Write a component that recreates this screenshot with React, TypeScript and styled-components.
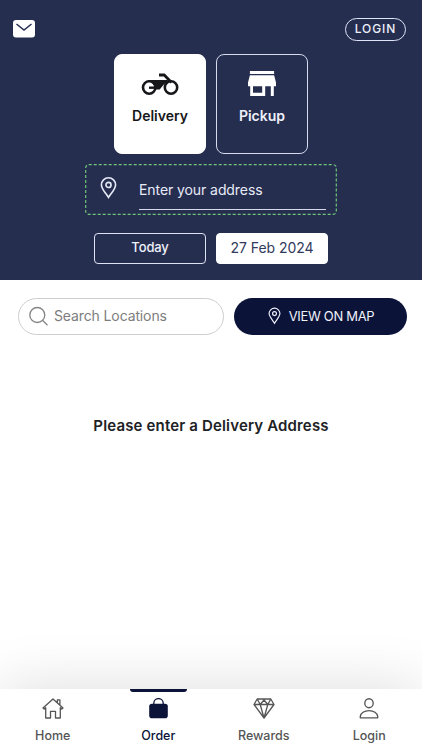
import React from "react";
import styled, { createGlobalStyle } from "styled-components";

const navy = "#262e50";
const deepNavy = "#0b1339";

const GlobalStyle = createGlobalStyle`
  *, *::before, *::after { box-sizing: border-box; }
  body { margin: 0; background: #fff; font-family: Inter, "Liberation Sans", sans-serif; }
  button, input { font: inherit; margin: 0; padding: 0; border: 0; background: none; color: inherit; }
  svg { display: block; flex: none; }
`;

const Screen = styled.div`
  width: 422px;
  height: 750px;
  display: flex;
  flex-direction: column;
  overflow: hidden;
  background: #fff;
`;

const Header = styled.header`
  height: 280px;
  flex: none;
  display: flex;
  flex-direction: column;
  align-items: center;
  padding-top: 17px;
  background: ${navy};
`;

const TopBar = styled.div`
  width: 100%;
  height: 24px;
  display: flex;
  align-items: center;
  justify-content: space-between;
  padding: 0 16px 0 13px;
`;

const LoginPill = styled.button`
  width: 61px;
  height: 23px;
  border: 1.5px solid #dfe4f8;
  border-radius: 12px;
  color: #edf0fa;
  font-size: 12px;
  font-weight: 500;
  letter-spacing: 0.9px;
  line-height: 20px;
`;

const Modes = styled.div`
  display: flex;
  gap: 10px;
  margin-top: 13px;
`;

const ModeCard = styled.button<{ $active?: boolean }>`
  width: 92px;
  height: 100px;
  display: flex;
  flex-direction: column;
  align-items: center;
  padding-top: ${(p) => (p.$active ? 16 : 15)}px;
  border: 1px solid ${(p) => (p.$active ? "#fff" : "#d5daef")};
  border-radius: 8px;
  background: ${(p) => (p.$active ? "#fff" : "transparent")};
  color: ${(p) => (p.$active ? "#17171a" : "#eef0f9")};
  font-size: 14px;
  font-weight: 600;
  line-height: 18px;
  gap: ${(p) => (p.$active ? 9 : 10)}px;
`;

const AddressBox = styled.div`
  position: relative;
  width: 252px;
  height: 51px;
  margin-top: 10px;
  display: flex;
  padding: 12px 11px 5px 15px;
  color: #e6e9f6;
`;

const DashedFrame = styled.svg`
  position: absolute;
  inset: 0;
  pointer-events: none;
`;

const AddressInput = styled.input`
  width: 187px;
  height: 34px;
  margin: 0 0 0 auto;
  padding-bottom: 6px;
  border-bottom: 1px solid #d6daeb;
  outline: 0;
  border-radius: 0;
  font-size: 14px;
  letter-spacing: -0.08px;
  &::placeholder { color: #e8ebf7; opacity: 1; }
`;

const Dates = styled.div`
  display: flex;
  gap: 10px;
  margin-top: 17.5px;
`;

const DateButton = styled.button<{ $filled?: boolean }>`
  width: 112px;
  height: 31px;
  padding-bottom: 2px;
  border: 1.3px solid ${(p) => (p.$filled ? "#fff" : "#dde2f5")};
  border-radius: 4px;
  background: ${(p) => (p.$filled ? "#fff" : "transparent")};
  color: ${(p) => (p.$filled ? "#323a5c" : "#eef0fa")};
  font-size: ${(p) => (p.$filled ? 14 : 13)}px;
  font-weight: ${(p) => (p.$filled ? 400 : 500)};
  letter-spacing: ${(p) => (p.$filled ? -0.05 : -0.15)}px;
`;

const Content = styled.main`
  flex: 1;
  display: flex;
  flex-direction: column;
  align-items: center;
`;

const SearchRow = styled.div`
  width: 100%;
  display: flex;
  gap: 10px;
  padding: 17.5px 15.5px 0 17.5px;
`;

const SearchField = styled.label`
  width: 206px;
  height: 37px;
  display: flex;
  align-items: center;
  gap: 6px;
  padding-left: 10.5px;
  border: 1px solid #cecece;
  border-radius: 19px;
  color: #858585;
`;

const SearchInput = styled.input`
  width: 150px;
  padding-bottom: 2px;
  font-size: 14px;
  letter-spacing: -0.12px;
  outline: 0;
  &::placeholder { color: #7d7d7d; opacity: 1; }
`;

const MapButton = styled.button`
  width: 173px;
  height: 37px;
  display: flex;
  align-items: center;
  justify-content: center;
  gap: 8px;
  padding-left: 2px;
  border-radius: 19px;
  background: ${deepNavy};
  color: #f0f2fb;
  font-size: 13px;
  letter-spacing: -0.33px;
`;

const Message = styled.h1`
  margin: 81.5px 0 0;
  font-size: 15px;
  line-height: 20px;
  font-weight: 600;
  letter-spacing: 0.16px;
  color: #202124;
`;

const Nav = styled.nav`
  height: 61.5px;
  flex: none;
  display: grid;
  grid-template-columns: repeat(4, 1fr);
  background: #fff;
  box-shadow: 0 0 60px rgba(0, 0, 0, 0.14);
`;

const NavItem = styled.button<{ $active?: boolean }>`
  display: flex;
  flex-direction: column;
  align-items: center;
  justify-content: flex-start;
  color: ${(p) => (p.$active ? deepNavy : "#555")};
  font-size: 12.5px;
  font-weight: 500;
  line-height: 16px;
  gap: 9px;
  &::before {
    content: "";
    width: 57px;
    height: 3px;
    margin-bottom: -3px;
    border-radius: 0 0 3px 3px;
    background: ${(p) => (p.$active ? deepNavy : "transparent")};
  }
`;

const Mail = () => (
  <svg width="22" height="18" viewBox="0 0 22 18">
    <rect width="22" height="17.5" rx="3" fill="#fff" />
    <path d="M3.5 4 11 10 18.5 4" fill="none" stroke={navy} strokeWidth="1.5" />
  </svg>
);

const Motorcycle = () => (
  <svg width="38" height="27" viewBox="0 0 38 27" fill="none" stroke="#17171a">
    <circle cx="8.2" cy="16.5" r="6.2" strokeWidth="2.6" />
    <circle cx="30" cy="16.5" r="6.2" strokeWidth="2.6" />
    <path d="M18 4h5.2L30.5 11.5" strokeWidth="2.8" />
    <path d="M6.5 9h20l1.8 1.4c-4.5 1.2-6.8 4.2-9.6 8.2h-4.2c-.2-4-2.9-7.2-6.7-8Z" fill="#17171a" stroke="none" />
    <path d="M8 16.7h8" strokeWidth="2.4" />
  </svg>
);

const Store = () => (
  <svg width="30" height="27" viewBox="0 0 30 27" fill="#fff">
    <path d="M2.9 .9h24.2v3.2H2.9ZM2.9 5.3h24.2L29 12.5v3.7h-2.2V26h-3V16.2h-5.6V26H3.2v-9.8H1v-3.7ZM6 16.2v6.5h9.2v-6.5Z" fillRule="evenodd" />
  </svg>
);

const Pin = ({ width, height, stroke }: { width: number; height: number; stroke: number }) => (
  <svg width={width} height={height} viewBox="0 0 18 24" fill="none" stroke="currentColor" strokeWidth={stroke}>
    <path d="M9 22C7.4 19.1 1.5 13 1.5 8.7a7.5 7.5 0 0 1 15 0C16.5 13 10.6 19.1 9 22Z" />
    <circle cx="9" cy="8.7" r="2.7" />
  </svg>
);

const Magnifier = () => (
  <svg width="19" height="20" viewBox="0 0 19 20" fill="none" stroke="currentColor" strokeWidth="1.3">
    <circle cx="8.3" cy="9" r="7.5" />
    <path d="m13.5 14.3 5 5" />
  </svg>
);

const HomeIcon = () => (
  <svg width="22" height="21" viewBox="0 0 22 21" fill="none" stroke="currentColor" strokeWidth="1.3" strokeLinejoin="round" strokeLinecap="round">
    <path d="m1 10 10-9 10 9-1.2 1-1.5-1.3V20h-4.8v-6.7H8.5V20H3.7V9.7L2.2 11ZM15.4 4.9V1.8h2.5v5.4" />
  </svg>
);

const Bag = () => (
  <svg width="19" height="21" viewBox="0 0 19 21">
    <rect x=".2" y="5.7" width="18.6" height="14.5" rx="2.8" fill="currentColor" />
    <path d="M4.8 6.5V5.3a4.7 4.7 0 0 1 9.4 0v1.2" fill="none" stroke="currentColor" strokeWidth="1.3" />
  </svg>
);

const Diamond = () => (
  <svg width="22" height="21" viewBox="0 0 22 21" fill="none" stroke="currentColor" strokeWidth="1.3" strokeLinejoin="round">
    <path d="M4.2 1h13.6L21 6.5 11 20 1 6.5ZM1 6.5h20M4.2 1l3 5.5L11 2l3.8 4.5 3-5.5M7.2 6.5 11 20l3.8-13.5M9.8 18h2.4" />
  </svg>
);

const Person = () => (
  <svg width="20" height="21" viewBox="0 0 20 21" fill="none" stroke="currentColor" strokeWidth="1.35" strokeLinejoin="round">
    <ellipse cx="10" cy="5.2" rx="4.2" ry="4.5" />
    <path d="M1.3 19.8v-1.4c.3-3.2 4-5.8 8.7-5.8s8.4 2.6 8.7 5.8v1.4Z" />
  </svg>
);

const tabs = [
  { name: "Home", Icon: HomeIcon },
  { name: "Order", Icon: Bag },
  { name: "Rewards", Icon: Diamond },
  { name: "Login", Icon: Person },
];

export default function App() {
  return (
    <>
      <GlobalStyle />
      <Screen>
        <Header>
          <TopBar>
            <Mail />
            <LoginPill>LOGIN</LoginPill>
          </TopBar>
          <Modes>
            <ModeCard $active><Motorcycle />Delivery</ModeCard>
            <ModeCard><Store />Pickup</ModeCard>
          </Modes>
          <AddressBox>
            <DashedFrame width="252" height="51">
              <rect x=".7" y=".7" width="250.6" height="49.6" rx="3" fill="none" stroke="#70c777" strokeWidth="1.2" strokeDasharray="3 2" />
            </DashedFrame>
            <Pin width={17} height={24} stroke={1.7} />
            <AddressInput placeholder="Enter your address" />
          </AddressBox>
          <Dates>
            <DateButton>Today</DateButton>
            <DateButton $filled>27 Feb 2024</DateButton>
          </Dates>
        </Header>
        <Content>
          <SearchRow>
            <SearchField><Magnifier /><SearchInput placeholder="Search Locations" /></SearchField>
            <MapButton><Pin width={13} height={18} stroke={1.6} />VIEW ON MAP</MapButton>
          </SearchRow>
          <Message>Please enter a Delivery Address</Message>
        </Content>
        <Nav>
          {tabs.map(({ name, Icon }) => (
            <NavItem key={name} $active={name === "Order"}><Icon />{name}</NavItem>
          ))}
        </Nav>
      </Screen>
    </>
  );
}
